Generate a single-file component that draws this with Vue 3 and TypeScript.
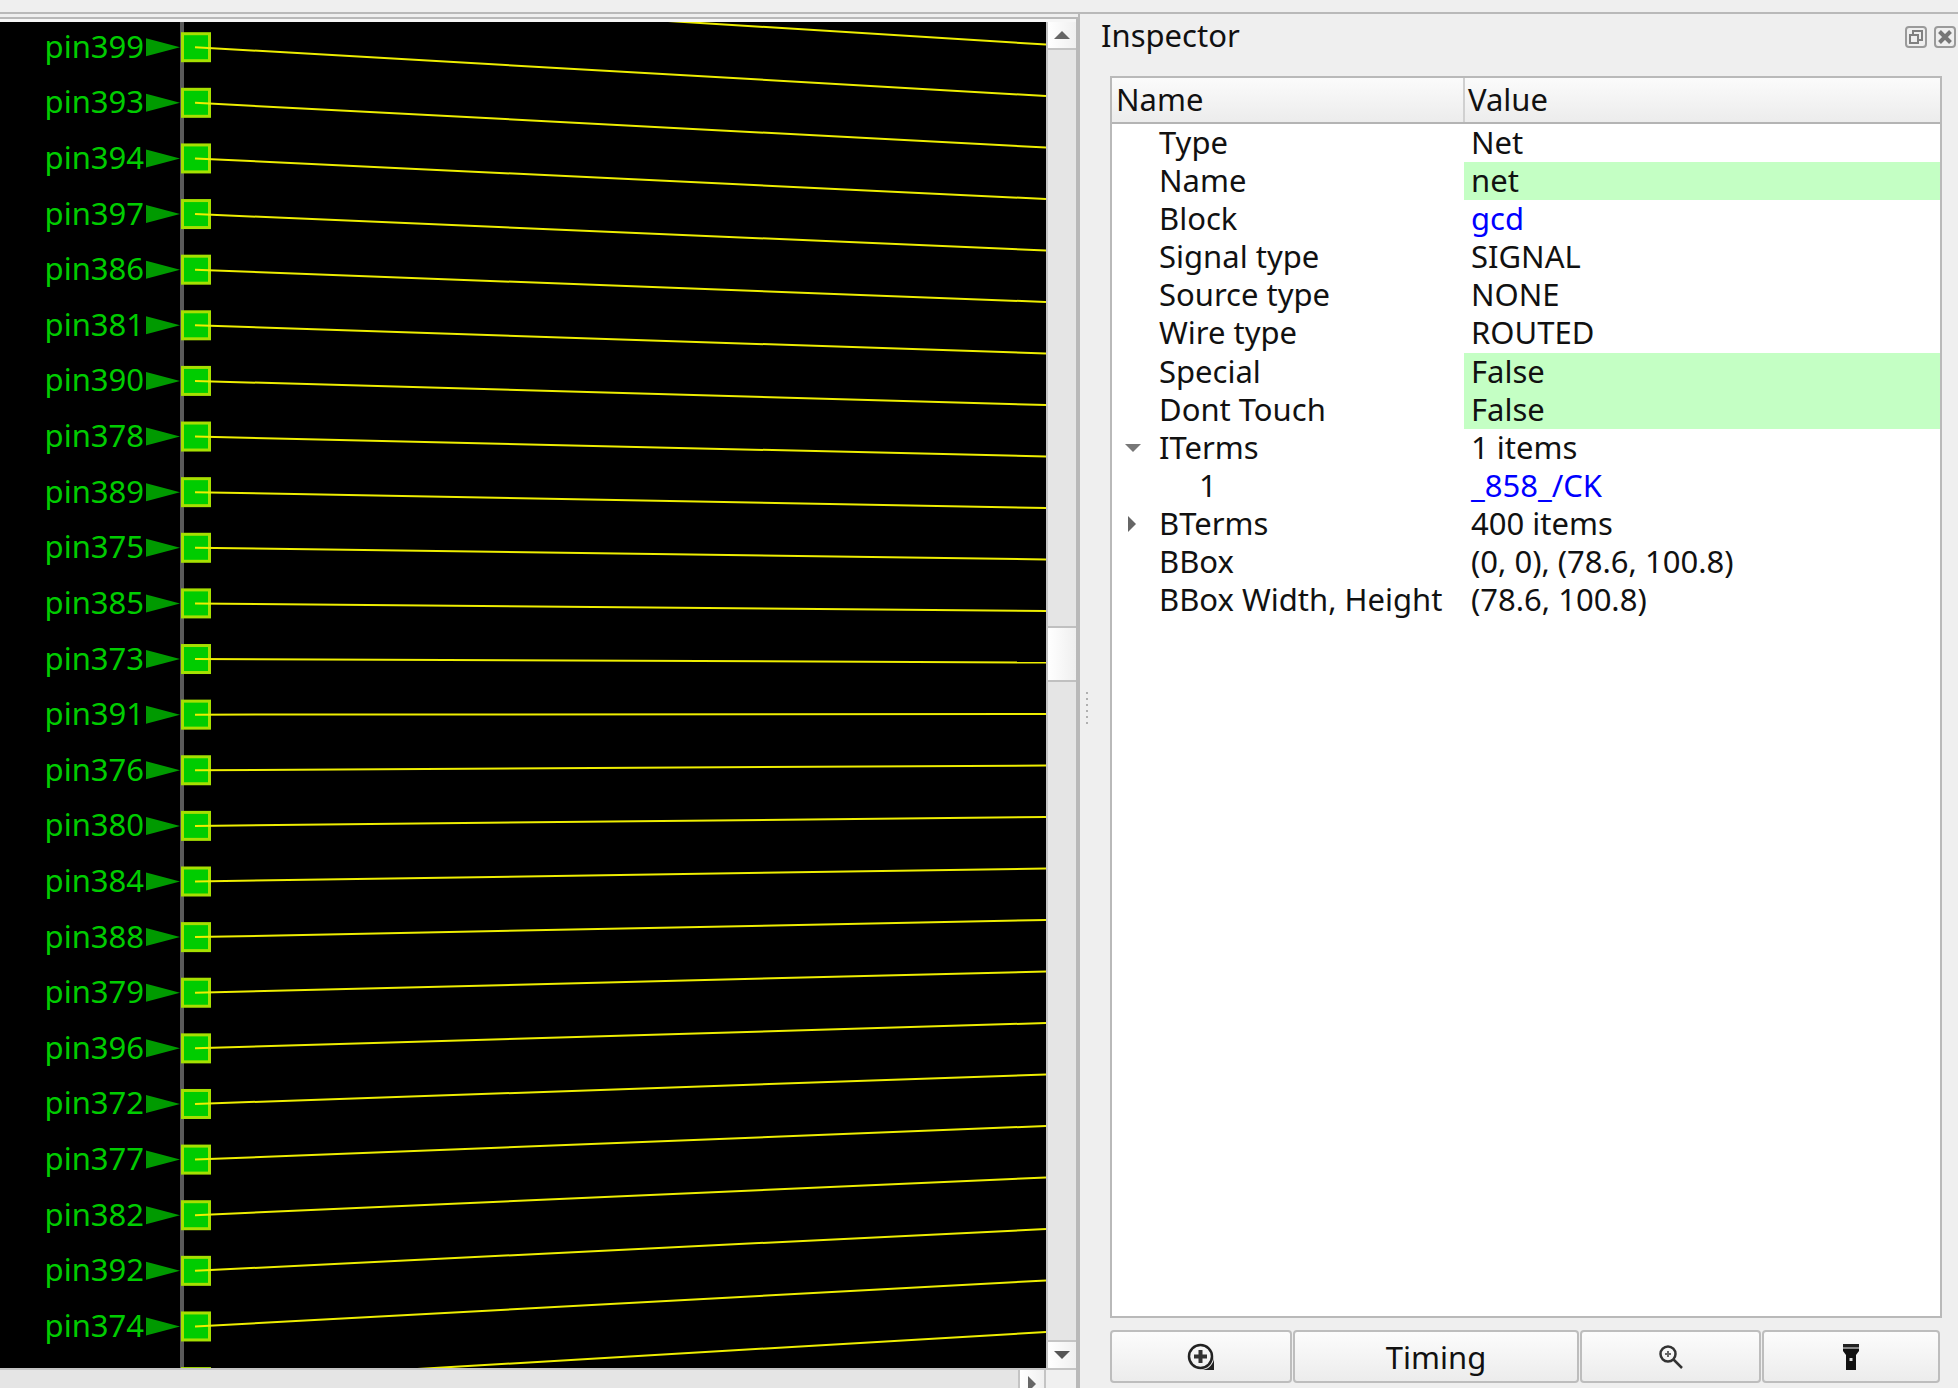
<script setup lang="ts">
const names = ['pin399','pin393','pin394','pin397','pin386','pin381','pin390','pin378','pin389','pin375','pin385','pin373','pin391','pin376','pin380','pin384','pin388','pin379','pin396','pin372','pin377','pin382','pin392','pin374']
const pitch = 55.62
const y0 = 25.2
const pins = names.map((name, i) => ({ name, y: y0 + pitch * i }))
const lines = Array.from({ length: 26 }, (_, k) => {
  const i = k - 1
  return { y1: y0 + pitch * i, y2: 74 + 51.5 * i }
})
const extraSquareY = y0 + pitch * 24

interface Row { label: string; value: string; kind?: 'edit' | 'link'; arrow?: 'down' | 'right'; child?: boolean }
const rows: Row[] = [
  { label: 'Type', value: 'Net' },
  { label: 'Name', value: 'net', kind: 'edit' },
  { label: 'Block', value: 'gcd', kind: 'link' },
  { label: 'Signal type', value: 'SIGNAL' },
  { label: 'Source type', value: 'NONE' },
  { label: 'Wire type', value: 'ROUTED' },
  { label: 'Special', value: 'False', kind: 'edit' },
  { label: 'Dont Touch', value: 'False', kind: 'edit' },
  { label: 'ITerms', value: '1 items', arrow: 'down' },
  { label: '1', value: '_858_/CK', kind: 'link', child: true },
  { label: 'BTerms', value: '400 items', arrow: 'right' },
  { label: 'BBox', value: '(0, 0), (78.6, 100.8)' },
  { label: 'BBox Width, Height', value: '(78.6, 100.8)' }
]
</script>

<template>
  <div class="app">
    <div class="topstrip"></div>
    <div class="main">
      <section class="left">
        <div class="viewrow">
          <div class="canvas">
            <svg class="layout" width="1046" height="1346" viewBox="0 0 1046 1346">
              <rect x="180" y="0" width="4" height="1346" fill="#5a5a5a" />
              <g v-for="p in pins" :key="p.name">
                <text class="pinlabel" x="144" :y="p.y + 10.5" text-anchor="end">{{ p.name }}</text>
                <polygon :points="`146,${p.y - 9} 180,${p.y} 146,${p.y + 9}`" fill="#009a00" />
                <rect x="182.5" :y="p.y - 13.5" width="27" height="27" fill="#00cc00" stroke="#a6e000" stroke-width="3" />
              </g>
              <rect x="182.5" :y="extraSquareY - 13.5" width="27" height="27" fill="#00cc00" stroke="#a6e000" stroke-width="3" />
              <line v-for="(l, i) in lines" :key="i" x1="195" :y1="l.y1" x2="1046" :y2="l.y2" stroke="#eeee00" stroke-width="2" />
            </svg>
          </div>
          <div class="vbar">
            <div class="sbtn"><span class="tri up"></span></div>
            <div class="groove grow1"></div>
            <div class="thumb"></div>
            <div class="groove grow2"></div>
            <div class="sbtn down"><span class="tri dn"></span></div>
          </div>
        </div>
        <div class="hbar">
          <div class="hgroove"></div>
          <div class="hbtn"><span class="tri rt"></span></div>
          <div class="corner"></div>
        </div>
      </section>
      <div class="splitter"><i v-for="n in 6" :key="n"></i></div>
      <section class="right">
        <header class="title">
          <span>Inspector</span>
          <div class="dockbtns">
            <svg width="22" height="22" viewBox="0 0 22 22" fill="none" stroke="#808080" stroke-width="2">
              <rect x="1" y="1" width="20" height="20" rx="3" stroke="#9a9a9a" />
              <path d="M8 9V5h9v9h-4" />
              <rect x="5" y="9" width="8" height="8" />
            </svg>
            <svg width="22" height="22" viewBox="0 0 22 22" fill="none">
              <rect x="1" y="1" width="20" height="20" rx="3" stroke="#9a9a9a" stroke-width="2" />
              <path d="M5.5 5.5 16.5 16.5M16.5 5.5 5.5 16.5" stroke="#777" stroke-width="4" />
            </svg>
          </div>
        </header>
        <div class="tree">
          <div class="thead">
            <div class="th name">Name</div>
            <div class="th value">Value</div>
          </div>
          <div v-for="r in rows" :key="r.label" class="row">
            <div class="cell label" :class="{ child: r.child }">
              <span v-if="r.arrow === 'down'" class="tri treedown"></span>
              <span v-if="r.arrow === 'right'" class="tri treeright"></span>
              {{ r.label }}
            </div>
            <div class="cell val" :class="{ edit: r.kind === 'edit', link: r.kind === 'link' }">{{ r.value }}</div>
          </div>
        </div>
        <div class="buttons">
          <button class="btn first">
            <svg width="28" height="28" viewBox="0 0 28 28" fill="none">
              <circle cx="13.5" cy="13.5" r="11.5" stroke="#222" stroke-width="2.5" />
              <path d="M13.5 7v13M7 13.5h13" stroke="#333" stroke-width="4" />
              <path d="M27 14v13H14a13 13 0 0 0 13-13z" fill="#222" />
            </svg>
          </button>
          <button class="btn wide">Timing</button>
          <button class="btn small">
            <svg width="24" height="24" viewBox="0 0 24 24" fill="none">
              <circle cx="9" cy="9" r="7.5" stroke="#333" stroke-width="2.5" />
              <path d="M9 6v6M6 9h6" stroke="#666" stroke-width="2" />
              <path d="M14.5 14.5 23 23" stroke="#333" stroke-width="2.5" />
            </svg>
          </button>
          <button class="btn last">
            <svg width="16" height="26" viewBox="0 0 16 26">
              <rect x="0" y="0" width="16" height="3" fill="#222" />
              <rect x="0" y="3" width="16" height="2" fill="#888" />
              <path d="M0 5h16v2l-3 4v15H3V11L0 7z" fill="#111" />
              <rect x="6.5" y="14" width="3" height="3" fill="#ddd" />
            </svg>
          </button>
        </div>
      </section>
    </div>
  </div>
</template>

<style>
html, body { margin: 0; padding: 0; background: #efefef; overflow: hidden; }
</style>

<style scoped>
.app {
  width: 1958px;
  height: 1388px;
  display: flex;
  flex-direction: column;
  overflow: hidden;
  background: #efefef;
  font-family: "Noto Sans", "Open Sans", sans-serif;
  color: #111;
}
.topstrip { height: 12px; flex: none; border-bottom: 2px solid #b9b9b9; }
.main { flex: 1; display: flex; min-height: 0; }
.left {
  width: 1076px;
  flex: none;
  display: flex;
  flex-direction: column;
  margin-top: 3px;
  border-top: 2px solid #b9b9b9;
  padding-top: 3px;
  border-right: 2px solid #b9b9b9;
  box-sizing: content-box;
  background: #f6f6f6;
}
.viewrow { flex: 1; display: flex; min-height: 0; }
.canvas { width: 1046px; flex: none; background: #000; overflow: hidden; }
.layout { display: block; }
.pinlabel { font-family: "Noto Sans", sans-serif; font-size: 31px; fill: #00cc00; }
.vbar {
  width: 28px;
  flex: none;
  display: flex;
  flex-direction: column;
  border-left: 2px solid #c4c4c4;
  background: #e5e5e5;
}
.sbtn {
  height: 26px;
  flex: none;
  display: flex;
  align-items: center;
  justify-content: center;
  background: linear-gradient(90deg, #fff, #f0f0f0);
  border-bottom: 2px solid #c4c4c4;
}
.sbtn.down { border-bottom: 0; border-top: 2px solid #c4c4c4; }
.groove { background: #e5e5e5; }
.grow1 { height: 576px; flex: none; }
.grow2 { flex: 1; }
.thumb {
  height: 52px;
  flex: none;
  background: linear-gradient(90deg, #fff, #efefef);
  border-top: 2px solid #c0c0c0;
  border-bottom: 2px solid #c0c0c0;
}
.tri { display: block; width: 0; height: 0; }
.up { border: 8px solid transparent; border-top: 0; border-bottom: 8px solid #666; }
.dn { border: 8px solid transparent; border-bottom: 0; border-top: 8px solid #555; }
.rt { border: 8px solid transparent; border-right: 0; border-left: 8px solid #666; }
.hbar { height: 18px; flex: none; display: flex; border-top: 2px solid #c4c4c4; }
.hgroove { width: 1018px; flex: none; background: #e5e5e5; border-right: 2px solid #c4c4c4; }
.hbtn {
  width: 26px;
  flex: none;
  display: flex;
  align-items: center;
  justify-content: flex-start;
  padding-left: 8px;
  box-sizing: border-box;
  padding-top: 10px;
  background: linear-gradient(90deg, #fff, #f0f0f0);
  border-right: 2px solid #c4c4c4;
}
.corner { flex: 1; background: #f0f0f0; }
.splitter {
  width: 32px;
  flex: none;
  box-sizing: border-box;
  position: relative;
  display: flex;
  flex-direction: column;
  align-items: center;
  justify-content: center;
  gap: 4px;
  padding-right: 14px;
  padding-top: 14px;
}
.splitter i { display: block; width: 2px; height: 2px; background: #b0b0b0; }
.right {
  flex: 1;
  min-width: 0;
  display: flex;
  flex-direction: column;
  margin-left: -32px;
  border-left: 2px solid #b9b9b9;
  padding-left: 30px;
  padding-right: 16px;
}
.title {
  height: 62px;
  flex: none;
  display: flex;
  align-items: flex-start;
  justify-content: space-between;
  font-size: 31px;
  line-height: 40px;
  margin-right: -14px;
}
.title span { margin-left: -9px; margin-top: 1px; }
.dockbtns { display: flex; gap: 7px; margin-top: 12px; }
.tree {
  flex: none;
  height: 1242px;
  box-sizing: border-box;
  background: #fff;
  border: 2px solid #b9b9b9;
  font-size: 31px;
}
.thead {
  height: 46px;
  box-sizing: border-box;
  display: flex;
  border-bottom: 2px solid #b4b4b4;
  background: linear-gradient(#fbfbfb, #ececec);
}
.th { line-height: 42px; padding-left: 4px; box-sizing: border-box; }
.th.name { width: 353px; border-right: 2px solid #d0d0d0; }
.th.value { flex: 1; padding-left: 3px; }
.row { height: 38.1px; display: flex; line-height: 36px; white-space: nowrap; }
.cell { box-sizing: border-box; }
.label { width: 352px; padding-left: 47px; position: relative; }
.label.child { padding-left: 87px; }
.val { flex: 1; padding-left: 7px; }
.edit { background: #c4ffc4; }
.link { color: #0000ff; }
.treedown { position: absolute; left: 13px; top: 15px; border: 8px solid transparent; border-bottom: 0; border-top: 8px solid #777; }
.treeright { position: absolute; left: 16px; top: 11px; border: 8px solid transparent; border-right: 0; border-left: 8px solid #666; }
.buttons { flex: none; margin-top: 12px; display: flex; height: 53px; }
.btn {
  box-sizing: border-box;
  height: 53px;
  padding: 0;
  border: 2px solid #bdbdbd;
  border-radius: 4px;
  background: linear-gradient(#fcfcfc, #ececec);
  font-family: inherit;
  font-size: 31px;
  color: #111;
  display: flex;
  align-items: center;
  justify-content: center;
  margin-right: 1px;
}
.btn.first { width: 182px; }
.btn.small { width: 181px; }
.btn.wide { width: 286px; }
.btn.last { width: 178px; }
</style>
